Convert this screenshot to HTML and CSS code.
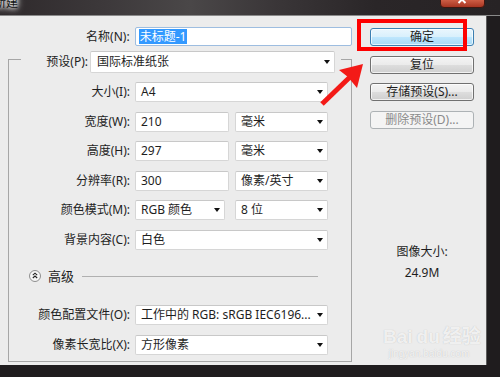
FILE: index.html
```html
<!DOCTYPE html>
<html>
<head>
<meta charset="utf-8">
<link rel="stylesheet" href="styles.css">
</head>
<body>
<div class="window">
  <div class="titlebar">
    <span class="title">新建</span>
    <span class="close">
      <svg width="45" height="8" viewBox="0 0 45 8">
        <defs>
          <linearGradient id="cg" x1="0" y1="0" x2="0" y2="1">
            <stop offset="0" stop-color="#d8694f"/>
            <stop offset="1" stop-color="#a5321f"/>
          </linearGradient>
        </defs>
        <path d="M0.5 -2 V4 Q0.5 7.5 4 7.5 H41 Q44.5 7.5 44.5 4 V-2 Z" fill="url(#cg)" stroke="#3d1710"/>
        <path d="M18.5 -4 L25.5 3 M25.5 -4 L18.5 3" stroke="#fff" stroke-width="2"/>
      </svg>
    </span>
  </div>
  <div class="main">
    <div class="left">
      <div class="name-row">
        <span class="lbl name-lbl">名称(N):</span>
        <div class="name-input"><span class="hl">未标题-1</span></div>
      </div>
      <fieldset class="group">
        <legend class="preset">
          <div class="preset-in">
            <span class="lbl preset-lbl">预设(P):</span>
            <div class="box select w245">国际标准纸张</div>
          </div>
        </legend>
        <div class="rows">
          <div class="row">
            <span class="lbl">大小(I):</span>
            <div class="ctrl"><div class="box select w193">A4</div></div>
          </div>
          <div class="row">
            <span class="lbl">宽度(W):</span>
            <div class="ctrl pair"><div class="box w94">210</div><div class="box select w93">毫米</div></div>
          </div>
          <div class="row">
            <span class="lbl">高度(H):</span>
            <div class="ctrl pair"><div class="box w94">297</div><div class="box select w93">毫米</div></div>
          </div>
          <div class="row">
            <span class="lbl">分辨率(R):</span>
            <div class="ctrl pair"><div class="box w94">300</div><div class="box select w93">像素/英寸</div></div>
          </div>
          <div class="row">
            <span class="lbl">颜色模式(M):</span>
            <div class="ctrl pair wide-gap"><div class="box select w90">RGB 颜色</div><div class="box select w93">8 位</div></div>
          </div>
          <div class="row">
            <span class="lbl">背景内容(C):</span>
            <div class="ctrl"><div class="box select w193">白色</div></div>
          </div>
          <div class="adv">
            <svg class="adv-icon" width="12" height="12" viewBox="0 0 12 12">
              <circle cx="6" cy="6" r="5.5" fill="#f7f7f7" stroke="#8e8e8e"/>
              <path d="M3.8 5.2 L6 3.2 L8.2 5.2 M3.8 8 L6 6 L8.2 8" fill="none" stroke="#222" stroke-width="1.1"/>
            </svg>
            <span class="adv-text">高级</span>
            <span class="adv-line"></span>
          </div>
          <div class="row after-adv">
            <span class="lbl">颜色配置文件(O):</span>
            <div class="ctrl"><div class="box select w193">工作中的 RGB: sRGB IEC6196...</div></div>
          </div>
          <div class="row">
            <span class="lbl">像素长宽比(X):</span>
            <div class="ctrl"><div class="box select w193">方形像素</div></div>
          </div>
        </div>
      </fieldset>
    </div>
    <div class="right">
      <div class="btn default">确定</div>
      <div class="btn">复位</div>
      <div class="btn">存储预设(S)...</div>
      <div class="btn disabled">删除预设(D)...</div>
      <div class="imgsize">
        <div>图像大小:</div>
        <div class="size-val">24.9M</div>
      </div>
    </div>
  </div>

  <div class="redbox"></div>
  <svg class="ann-arrow" width="60" height="55" viewBox="310 55 60 55">
    <line x1="322" y1="104" x2="350" y2="77" stroke="#f31a17" stroke-width="5"/>
    <polygon points="363,64 339,70 348,77 357,88" fill="#f31a17"/>
  </svg>

  <div class="wm">
    <div class="wm-top">Bai<span class="wm-du">du</span>经验</div>
    <div class="wm-url">jingyan.baidu.com</div>
  </div>
</div>
</body>
</html>
```

FILE: styles.css
```css
* { box-sizing: border-box; margin: 0; padding: 0; }
html, body { width: 500px; height: 377px; overflow: hidden; }
body {
  background: #1f1c1e;
  font-family: "Noto Sans", "Noto Sans CJK SC", sans-serif;
  font-size: 12px;
  color: #1e1e1e;
}
.window { position: relative; width: 500px; height: 377px; }

.titlebar {
  height: 16px;
  display: flex;
  align-items: flex-start;
  overflow: hidden;
  border-bottom: 1px solid #8a8a8a;
  background: linear-gradient(90deg, #2e292b 0%, #3c383a 20%, #4a4748 38%, #3a3638 55%, #2a2628 75%, #272325 100%);
}
.title {
  margin: -5px 0 0 -6px;
  font-size: 12px;
  line-height: 16px;
  color: #111;
  text-shadow: 0 0 4px #fff, 0 0 6px #fff, 0 0 8px #ddd;
}
.close { margin-left: auto; margin-right: 15px; height: 8px; display: block; line-height: 0; }

.main {
  display: flex;
  width: 487px;
  height: 349px;
  background: #ececec;
  border-right: 1px solid #5c5c5c;
}
.left { width: 352px; padding-top: 11px; }

.lbl { text-align: right; white-space: nowrap; line-height: 16px; }

.name-row { display: flex; align-items: center; height: 19px; }
.name-lbl { width: 130px; }
.name-input {
  margin-left: 5px;
  width: 218px;
  height: 19px;
  background: #fff;
  border: 1px solid #9dbde0;
  border-radius: 2px;
  padding-left: 3px;
  display: flex;
  align-items: center;
}
.hl { background: #3399ff; color: #fff; line-height: 15px; padding: 0 1px; }

.group {
  margin: -1px 0 0 8px;
  width: 344px;
  border: 1px solid #a6a6a6;
  padding: 9px 0 6px 0;
  min-inline-size: 0;
}
.preset { margin-left: 12px; width: 320px; padding: 6px 6px 0 0; }
.preset-in { display: flex; align-items: center; gap: 2px; }
.preset-lbl { width: 67px; }

.box {
  height: 20px;
  background: #fff;
  border: 1px solid #d6d6d6;
  border-top-color: #c8c8c8;
  border-radius: 2px;
  padding-left: 5px;
  display: flex;
  align-items: center;
  white-space: nowrap;
  line-height: 16px;
}
.select::after {
  content: "";
  margin-left: auto;
  margin-right: 4px;
  border-left: 3.5px solid transparent;
  border-right: 3.5px solid transparent;
  border-top: 4px solid #111;
}
.w245 { width: 245px; height: 22px; padding-left: 6px; }
.w193 { width: 193px; }
.w94 { width: 94px; }
.w93 { width: 93px; }
.w90 { width: 90px; }

.rows { display: flex; flex-direction: column; }
.row { display: flex; align-items: center; height: 20px; margin-top: 9.5px; }
.row:first-child { margin-top: 0; }
.row .lbl { width: 121px; margin-right: 5px; }
.ctrl { display: flex; }
.pair { gap: 6px; }
.pair.wide-gap { gap: 10px; }

.adv { display: flex; align-items: center; height: 16px; margin-top: 18.5px; padding-left: 20px; }
.adv-icon { display: block; }
.adv-text { margin-left: 7px; font-size: 13px; line-height: 16px; }
.adv-line { margin-left: 8px; width: 236px; height: 1px; background: #b0b0b0; }
.row.after-adv { margin-top: 21px; }

.right {
  width: 134px;
  padding: 12px 0 0 18px;
  display: flex;
  flex-direction: column;
  gap: 9.5px;
}
.btn {
  width: 104px;
  height: 18px;
  border: 1px solid #707070;
  border-radius: 3px;
  background: linear-gradient(#f4f4f4 0%, #ebebeb 48%, #dddddd 52%, #cfcfcf 100%);
  box-shadow: inset 0 0 0 1px rgba(255,255,255,0.7);
  text-align: center;
  line-height: 16px;
  white-space: nowrap;
}
.btn.default {
  border-color: #3c7fb1;
  background: linear-gradient(#eaf6fd 0%, #d9f0fc 48%, #bee6fd 52%, #a7d9f5 100%);
}
.btn.disabled {
  border-color: #adb2b5;
  background: #f4f4f4;
  box-shadow: none;
  color: #8a8a8a;
}
.imgsize { margin-top: 106px; width: 104px; text-align: center; line-height: 16px; }
.size-val { margin-top: 5px; }

.redbox {
  position: absolute;
  left: 357px;
  top: 19px;
  width: 110px;
  height: 32px;
  border: 4px solid #fe0000;
}
.ann-arrow { position: absolute; left: 310px; top: 55px; }

.wm {
  position: absolute;
  left: 383px;
  top: 326px;
  width: 92px;
  color: rgba(255,255,255,0.8);
  text-shadow: 0 0 1px rgba(150,150,150,0.6);
  font-family: "Liberation Sans", "Noto Sans CJK SC", sans-serif;
}
.wm-top { font-size: 19px; font-weight: bold; line-height: 22px; white-space: nowrap; }
.wm-du { margin: 0 3px 0 4px; }
.wm-url { font-size: 10px; line-height: 12px; text-align: center; }
```
